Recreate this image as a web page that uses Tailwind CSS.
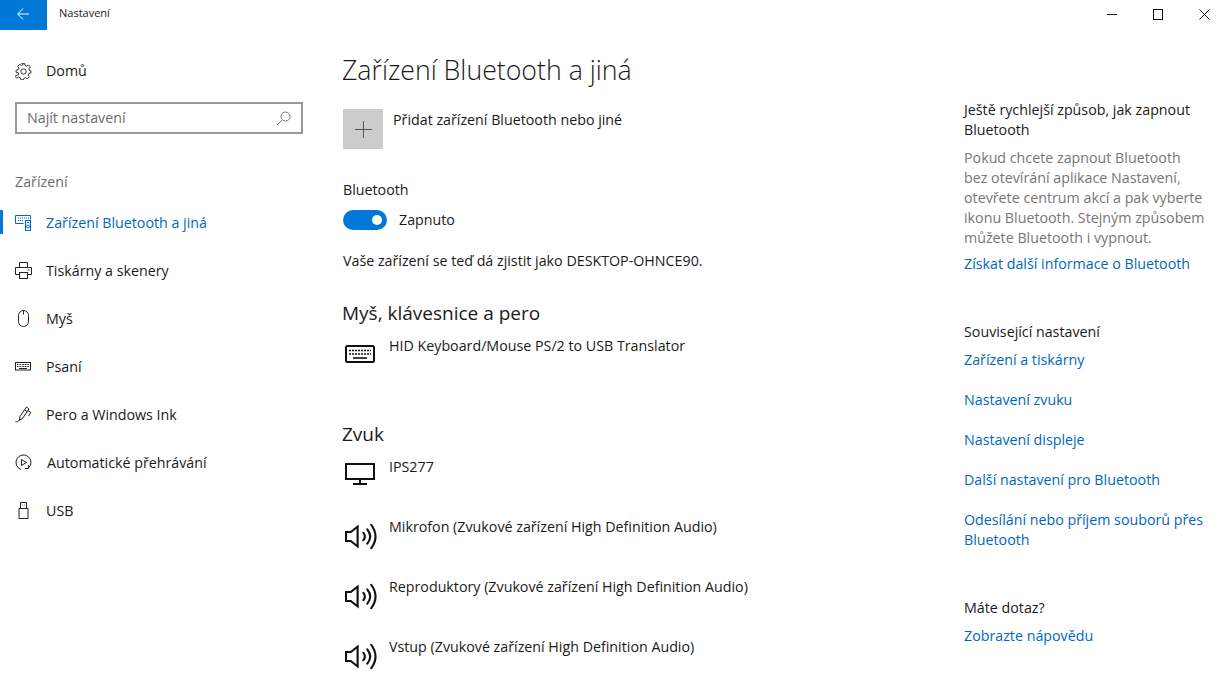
<!DOCTYPE html>
<html lang="cs">
<head>
    <meta charset="UTF-8">
    <title>Nastavení</title>
    <script src="https://cdn.jsdelivr.net/npm/@tailwindcss/browser@4"></script>
</head>
<body class="bg-white h-[684px] overflow-hidden font-['Open_Sans',sans-serif] text-[14.25px] text-[#1a1a1a]">

<!-- title bar -->
<div class="flex items-center h-[30px]">
    <div class="w-[47px] h-[30px] bg-[#0078d7] flex items-center justify-center pb-[2px] pr-[2px]">
        <svg width="12" height="12" viewBox="0 0 12 12" fill="none" stroke="#fff" stroke-width="1"><path d="M12 6H1M6 .5L.7 6 6 11.500"/></svg>
    </div>
    <div class="ml-3 mb-[3px] text-[11px]">Nastavení</div>
    <div class="ml-auto flex items-center gap-[36px] pr-[15px] pb-[2px]">
        <svg width="10" height="11" viewBox="0 0 10 11" stroke="#111" fill="none"><path d="M0 5.500h10"/></svg>
        <svg width="10" height="11" viewBox="0 0 10 11" stroke="#111" fill="none"><rect x=".5" y=".5" width="9" height="10"/></svg>
        <svg width="11" height="11" viewBox="0 0 11 11" stroke="#111" fill="none"><path d="M.5.5l10 10M10.500.5l-10 10"/></svg>
    </div>
</div>

<div class="flex">
    <!-- sidebar -->
    <aside class="w-[342px] shrink-0">
        <div class="flex items-center h-[24px] mt-[29px] pl-[15px]">
            <svg class="w-[17px] h-[17px] mr-[14px]" viewBox="0 0 24 24" fill="none" stroke="#222" stroke-width="1.300"><circle cx="12" cy="12" r="3.800"/><path d="M10 2h4l.6 3 2.300 1 2.600-1.700 2.800 2.800L20 9.700l1 2.300 2 .6v3l-3 .6-1 2.300 1.700 2.600-2.800 2.800-2.600-1.700-2.300 1-.6 2h-4l-.6-3-2.300-1-2.600 1.700-2.800-2.800L6 17.500l-1-2.300-3-.6v-3l3-.6 1-2.300-1.700-2.600 2.800-2.800 2.600 1.700 2.300-1z" transform="translate(-.5 -1.500)"/></svg>
            <span>Domů</span>
        </div>
        <div class="ml-[15px] mt-[19px] w-[288px] h-[32px] border-2 border-[#999] flex items-center px-[10px] text-[#6b6b6b]">
            <span>Najít nastavení</span>
            <svg class="ml-auto" width="15" height="15" viewBox="0 0 15 15" fill="none" stroke="#777"><circle cx="9.500" cy="5.500" r="4.500"/><path d="M6.300 8.700L1 14"/></svg>
        </div>
        <div class="ml-[15px] mt-[37px] text-[#6b6b6b]">Zařízení</div>
        <nav class="mt-[6px]">
            <div class="relative flex items-center h-[48px] pl-[15px] text-[#0067c0]">
                <span class="absolute left-0 top-[12px] w-[3px] h-[24px] bg-[#0078d7]"></span>
                <svg class="w-[17px] h-[17px] mr-[14px]" viewBox="0 0 17 17" fill="none" stroke="#0067c0"><path d="M8.500 9.500H.5v-8h15v4"/><path d="M3 4h1M5 4h1M7 4h1M9 4h1M11 4h1M13 4h1M3 6.500h1M5 6.500h1M7 6.500h1"/><rect x="10.500" y="6.500" width="5" height="10"/><circle cx="13" cy="12.500" r="1.500"/><path d="M12 8.500h2"/></svg>
                <span>Zařízení Bluetooth a jiná</span>
            </div>
            <div class="flex items-center h-[48px] pl-[15px]">
                <svg class="w-[17px] h-[17px] mr-[14px]" viewBox="0 0 17 17" fill="none" stroke="#222"><path d="M4.500 5V.5h8V5M4.500 12.500h-4V5.500h16v7h-4"/><rect x="4.500" y="10.500" width="8" height="6"/><path d="M13 8h1.500"/></svg>
                <span>Tiskárny a skenery</span>
            </div>
            <div class="flex items-center h-[48px] pl-[15px]">
                <svg class="w-[17px] h-[17px] mr-[14px]" viewBox="0 0 17 17" fill="none" stroke="#222"><path d="M3.500 5.500a5 5 0 0 1 10 0v6a5 5 0 0 1-10 0zM8.500.5v4"/></svg>
                <span>Myš</span>
            </div>
            <div class="flex items-center h-[48px] pl-[15px]">
                <svg class="w-[17px] h-[17px] mr-[14px]" viewBox="0 0 17 17" fill="none" stroke="#222"><rect x=".5" y="4.500" width="15" height="7.500"/><path d="M2 6.500h12M2 8.500h12" stroke-dasharray="1 .6"/><path d="M4 10.500h8"/></svg>
                <span>Psaní</span>
            </div>
            <div class="flex items-center h-[48px] pl-[15px]">
                <svg class="w-[17px] h-[17px] mr-[14px]" viewBox="0 0 17 17" fill="none" stroke="#222"><path d="M5 10.500L11.500 1 14 3 7.500 12.500l-3 1.500zM12.800 4.500l3 2-2.300 3.500M9.500 3.800l2.600 2M4.500 14c-1.200 1.500-2.500 2.500-4 1.500"/></svg>
                <span>Pero a Windows Ink</span>
            </div>
            <div class="flex items-center h-[48px] pl-[15px]">
                <svg class="w-[17px] h-[17px] mr-[15px]" viewBox="0 0 17 17" fill="none" stroke="#222"><path d="M6 15.500A7.500 7.500 0 1 1 13.500 14M13.500 11v3.500H10"/><path d="M6.500 5.500l5 3-5 3z"/></svg>
                <span>Automatické přehrávání</span>
            </div>
            <div class="flex items-center h-[48px] pl-[15px]">
                <svg class="w-[17px] h-[17px] mr-[14px]" viewBox="0 0 17 17" fill="none" stroke="#222"><path d="M5.500.5h6v6h-6zM4 6.500h9v10H4z"/><path d="M7.500 3h.5M9.500 3h.5"/></svg>
                <span>USB</span>
            </div>
        </nav>
    </aside>

    <!-- main column -->
    <main class="w-[622px] shrink-0">
        <h1 class="mt-[20px] h-[40px] leading-[40px] text-[26.7px] font-light">Zařízení Bluetooth a jiná</h1>
        <div class="mt-[19px] flex items-start">
            <div class="ml-[1px] w-[40px] h-[40px] bg-[#cccccc] flex items-center justify-center">
                <svg width="17" height="17" viewBox="0 0 17 17" stroke="#555"><path d="M8.500 0v17M0 8.500h17"/></svg>
            </div>
            <span class="ml-[10px]">Přidat zařízení Bluetooth nebo jiné</span>
        </div>
        <div class="mt-[31px] ml-[1px] leading-[20px]">Bluetooth</div>
        <div class="mt-[10px] ml-[1px] flex items-center h-[20px]">
            <div class="w-[44px] h-[20px] rounded-full bg-[#0078d7] flex items-center justify-end pr-[5px]">
                <span class="w-[10px] h-[10px] rounded-full bg-white"></span>
            </div>
            <span class="ml-[12px]">Zapnuto</span>
        </div>
        <div class="mt-[21px] ml-[1px] leading-[20px]">Vaše zařízení se teď dá zjistit jako DESKTOP-OHNCE90.</div>

        <h2 class="mt-[28px] leading-[28px] text-[19px]">Myš, klávesnice a pero</h2>
        <div class="mt-[9px] flex items-start h-[40px]">
            <svg class="ml-[3px] mt-[9px]" width="30" height="18" viewBox="0 0 30 18" fill="none" stroke="#111" stroke-width="2"><rect x="1" y="1" width="28" height="16" rx="1.500"/><path d="M4 5.500h22M4 9h22" stroke-dasharray="2 1" stroke-width="1.600"/><path d="M8 13h14" stroke-width="1.600"/></svg>
            <span class="ml-[14px] leading-[20px]">HID Keyboard/Mouse PS/2 to USB Translator</span>
        </div>

        <h2 class="mt-[44px] leading-[28px] text-[19px]">Zvuk</h2>
        <div class="mt-[9px] flex items-start h-[60px]">
            <svg class="ml-[3px] mt-[6px]" width="30" height="22" viewBox="0 0 30 22" fill="none" stroke="#111" stroke-width="2"><rect x="1" y="1" width="28" height="15"/><path d="M15 16v4M8 21h14"/></svg>
            <span class="ml-[14px] leading-[20px]">IPS277</span>
        </div>
        <div class="flex items-start h-[60px]">
            <svg class="ml-[3px] mt-[6px]" width="32" height="27" viewBox="0 0 33 30" preserveAspectRatio="none" fill="none" stroke="#111" stroke-width="2.200"><path d="M1 10h5l7-6v22l-7-6H1z"/><path d="M19 11q3 4 0 8M23 7q6 8 0 16M27 2q9 13 0 26" stroke-linecap="round"/></svg>
            <span class="ml-[12px] leading-[20px]">Mikrofon (Zvukové zařízení High Definition Audio)</span>
        </div>
        <div class="flex items-start h-[60px]">
            <svg class="ml-[3px] mt-[6px]" width="32" height="27" viewBox="0 0 33 30" preserveAspectRatio="none" fill="none" stroke="#111" stroke-width="2.200"><path d="M1 10h5l7-6v22l-7-6H1z"/><path d="M19 11q3 4 0 8M23 7q6 8 0 16M27 2q9 13 0 26" stroke-linecap="round"/></svg>
            <span class="ml-[12px] leading-[20px]">Reproduktory (Zvukové zařízení High Definition Audio)</span>
        </div>
        <div class="flex items-start h-[60px]">
            <svg class="ml-[3px] mt-[6px]" width="32" height="27" viewBox="0 0 33 30" preserveAspectRatio="none" fill="none" stroke="#111" stroke-width="2.200"><path d="M1 10h5l7-6v22l-7-6H1z"/><path d="M19 11q3 4 0 8M23 7q6 8 0 16M27 2q9 13 0 26" stroke-linecap="round"/></svg>
            <span class="ml-[12px] leading-[20px]">Vstup (Zvukové zařízení High Definition Audio)</span>
        </div>
    </main>

    <!-- right column -->
    <aside class="w-[241px] leading-[20px] mt-[70px]">
        <p>Ještě rychlejší způsob, jak zapnout Bluetooth</p>
        <p class="mt-[8px] text-[#767676]">Pokud chcete zapnout Bluetooth bez otevírání aplikace Nastavení, otevřete centrum akcí a pak vyberte ikonu Bluetooth. Stejným způsobem můžete Bluetooth i vypnout.</p>
        <a class="block mt-[6px] text-[#0067c0]">Získat další informace o Bluetooth</a>
        <p class="mt-[48px]">Související nastavení</p>
        <a class="block mt-[8px] text-[#0067c0]">Zařízení a tiskárny</a>
        <a class="block mt-[20px] text-[#0067c0]">Nastavení zvuku</a>
        <a class="block mt-[20px] text-[#0067c0]">Nastavení displeje</a>
        <a class="block mt-[20px] text-[#0067c0]">Další nastavení pro Bluetooth</a>
        <a class="block mt-[20px] text-[#0067c0]">Odesílání nebo příjem souborů přes Bluetooth</a>
        <p class="mt-[48px]">Máte dotaz?</p>
        <a class="block mt-[8px] text-[#0067c0]">Zobrazte nápovědu</a>
    </aside>
</div>
</body>
</html>
